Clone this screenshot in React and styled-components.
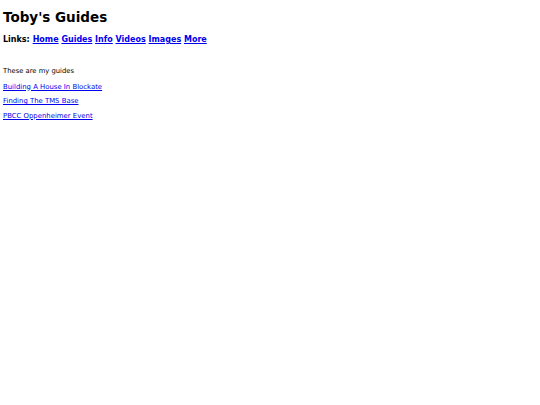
import React from 'react';
import styled, { createGlobalStyle } from 'styled-components';

const GlobalStyle = createGlobalStyle`
  body {
    margin: 0;
    padding: 3px;
    background: #fff;
    color: #000;
    font-family: 'DejaVu Sans', Verdana, sans-serif;
  }
`;

const Title = styled.h1`
  font-size: 13.5px;
  line-height: 16px;
  font-weight: bold;
  margin: 6px 0 10px 0;
`;

const NavBar = styled.div`
  font-size: 8px;
  line-height: 10px;
  font-weight: bold;
  margin-bottom: 22px;
`;

const NavLink = styled.a`
  color: #0000ee;
  text-decoration: underline;
`;

const Intro = styled.p`
  font-size: 6.8px;
  line-height: 9px;
  margin: 0 0 6.5px 0;
`;

const GuideLink = styled.a`
  display: block;
  font-size: 6.9px;
  line-height: 9px;
  color: #0000ee;
  text-decoration: underline;
  margin-bottom: 5.7px;
`;

const navItems = ['Home', 'Guides', 'Info', 'Videos', 'Images', 'More'];
const guides = ['Building A House In Blockate', 'Finding The TMS Base', 'PBCC Oppenheimer Event'];

export default function App() {
  return (
    <>
      <GlobalStyle />
      <Title>Toby's Guides</Title>
      <NavBar>
        Links:
        {navItems.map((n) => (
          <React.Fragment key={n}>
            {' '}
            <NavLink href="#">{n}</NavLink>
          </React.Fragment>
        ))}
      </NavBar>
      <Intro>These are my guides</Intro>
      {guides.map((g) => (
        <GuideLink key={g} href="#">{g}</GuideLink>
      ))}
    </>
  );
}
